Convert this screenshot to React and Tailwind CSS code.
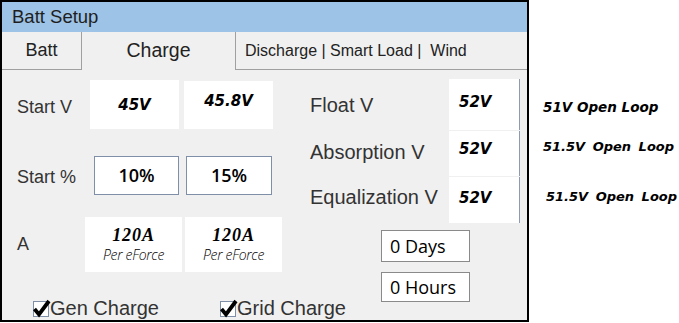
import React from "react";

const sans = { fontFamily: '"Liberation Sans", Arial, sans-serif' };

const Check = () => (
  <svg width="20" height="20" viewBox="0 0 20 20" className="shrink-0">
    <rect x="1.5" y="3.5" width="15" height="15" fill="#fff" stroke="#7f8fa8" />
    <path d="M2.5 11 L7 16.5 L17 3" fill="none" stroke="#000" strokeWidth="3.8" strokeLinejoin="miter" />
  </svg>
);

const App = () => {
  return (
    <div className="flex w-[679px] h-[323px] bg-white">
      {/* Panel */}
      <div className="w-[529px] h-[322px] shrink-0 border-2 border-black bg-[#f0f0f0] flex flex-col text-[#333]" style={sans}>
        {/* Title */}
        <div className="h-[30px] bg-[#9dc3e6] pl-[10px] flex items-center text-[18.5px] text-[#1e1e1e]">
          Batt Setup
        </div>

        {/* Tabs */}
        <div className="h-[38px] flex">
          <div className="w-[80px] border-r border-b border-[#a0a0a0] flex items-center justify-center text-[18px] text-[#222]">
            Batt
          </div>
          <div className="w-[153px] flex items-center justify-center text-[19.5px] text-[#222]">
            Charge
          </div>
          <div className="flex-1 border-l border-b border-[#a0a0a0] flex items-center pl-[9px] text-[16px] text-[#222]">
            Discharge | Smart Load |{"\u00a0"} Wind
          </div>
        </div>

        {/* Content */}
        <div className="flex-1 flex">
          {/* Left column */}
          <div className="w-[288px] shrink-0 flex flex-col pt-[10px] pl-[15px]">
            <div className="h-[49px] flex items-center">
              <div className="w-[73px] shrink-0 pt-[6px] text-[18px]">Start V</div>
              <div className="w-[89px] h-[49px] shrink-0 bg-white flex items-center justify-center pt-[2px] font-['DejaVu_Sans'] font-bold italic text-[15px] text-black">
                45V
              </div>
              <div className="ml-[5px] w-[89px] h-[48px] shrink-0 bg-white flex items-center justify-center pb-[6px] font-['DejaVu_Sans'] font-bold italic text-[15px] text-black">
                45.8V
              </div>
            </div>

            <div className="mt-[27px] h-[39px] flex items-center">
              <div className="w-[77px] shrink-0 pt-[3px] text-[18px]">Start %</div>
              <div className="w-[85px] h-[39px] shrink-0 bg-white border border-[#7f8fa8] flex items-center justify-center font-['Open_Sans'] font-semibold text-[18px] text-black">
                10%
              </div>
              <div className="ml-[7px] w-[86px] h-[39px] shrink-0 bg-white border border-[#7f8fa8] flex items-center justify-center font-['Open_Sans'] font-semibold text-[18px] text-black">
                15%
              </div>
            </div>

            <div className="mt-[22px] h-[55px] flex items-center">
              <div className="w-[68px] shrink-0 text-[18px]">A</div>
              {[0, 1].map((i) => (
                <div
                  key={i}
                  className={`w-[97px] h-[55px] shrink-0 bg-white flex flex-col items-center justify-center text-black ${i ? "ml-[3px]" : ""}`}
                >
                  <span className="font-['Liberation_Serif'] font-bold italic text-[18px] leading-[20px] tracking-[0.05em]">
                    120A
                  </span>
                  <span className="font-['Open_Sans'] font-light italic text-[14px] leading-[20px] tracking-[-0.02em]">
                    Per eForce
                  </span>
                </div>
              ))}
            </div>

            <div className="mt-[25px] h-[22px] flex items-center whitespace-nowrap text-[20px]">
              <div className="ml-[15px] w-[187px] shrink-0 flex items-center">
                <Check />
                <span className="-ml-[2px]">Gen Charge</span>
              </div>
              <div className="flex shrink-0 items-center">
                <Check />
                <span className="-ml-[2px]">Grid Charge</span>
              </div>
            </div>
          </div>

          {/* Right column */}
          <div className="flex-1 flex flex-col pt-[9px] pl-[20px] text-[20px]">
            <div className="h-[51px] flex">
              <div className="w-[139px] shrink-0 pt-[14px] leading-[24px]">Float V</div>
              <div className="w-[71px] bg-white border-r border-[#8d9ab0] pl-[10px] pt-[13px] leading-[20px] font-['DejaVu_Sans'] font-bold italic text-[15px] text-black">
                52V
              </div>
            </div>
            <div className="mt-[1px] h-[45px] flex">
              <div className="w-[139px] shrink-0 pt-[9px] leading-[24px]">Absorption V</div>
              <div className="w-[71px] bg-white border-r border-[#8d9ab0] pl-[10px] pt-[8px] leading-[20px] font-['DejaVu_Sans'] font-bold italic text-[15px] text-black">
                52V
              </div>
            </div>
            <div className="mt-[1px] h-[46px] flex">
              <div className="w-[139px] shrink-0 pt-[8px] leading-[24px] whitespace-nowrap">Equalization V</div>
              <div className="w-[71px] bg-white border-r border-[#8d9ab0] pl-[10px] pt-[11px] leading-[20px] font-['DejaVu_Sans'] font-bold italic text-[15px] text-black">
                52V
              </div>
            </div>

            <div className="mt-[7px] ml-[71px] w-[89px] h-[32px] bg-white border border-[#8a8a8a] flex items-center pl-[8px] font-['Open_Sans'] text-[18px] text-black">
              0 Days
            </div>
            <div className="mt-[10px] ml-[71px] w-[89px] h-[30px] bg-white border border-[#8a8a8a] flex items-center pl-[8px] font-['Open_Sans'] text-[18px] text-black">
              0 Hours
            </div>
          </div>
        </div>
      </div>

      {/* Notes */}
      <div className="flex flex-col pl-[14px] font-['DejaVu_Sans'] font-bold italic text-[13.5px] leading-[18px] text-black whitespace-nowrap">
        <div className="mt-[98px]">51V Open Loop</div>
        <div className="mt-[22px] text-[13px] [word-spacing:3px]">51.5V Open Loop</div>
        <div className="mt-[32px] ml-[3px] text-[13px] [word-spacing:3px]">51.5V Open Loop</div>
      </div>
    </div>
  );
};

export default App;
